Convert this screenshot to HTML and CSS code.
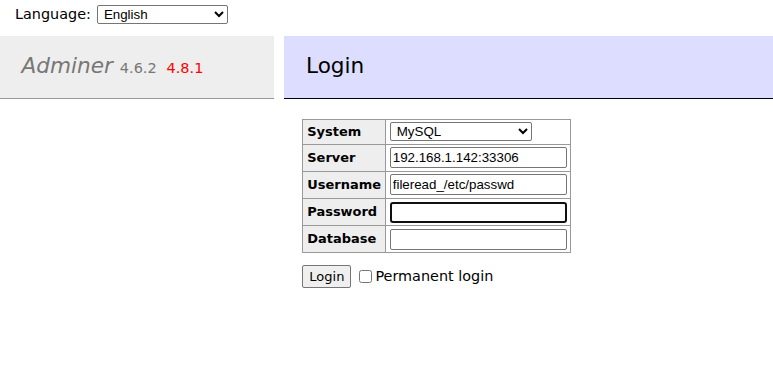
FILE: index.html
```html
<!DOCTYPE html>
<html>
<head>
    <title>Login - Adminer</title>
    <meta charset="utf-8">
    <link rel="stylesheet" href="styles.css">
</head>
<body>

    <form class="lang">
        <label for="lang_sel">Language:</label>
        <select id="lang_sel" name="lang">
            <option selected>English</option>
            <option>Deutsch</option>
            <option>Français</option>
        </select>
    </form>

    <div class="page">

        <div id="menu">
            <h1>
                <a class="logo" href="#">Adminer</a>
                <span class="version">4.6.2</span>
                <span class="version new">4.8.1</span>
            </h1>
        </div>

        <div id="content">
            <h2>Login</h2>

            <form class="login">
                <table class="layout">
                    <tr>
                        <th>System</th>
                        <td>
                            <select class="sys" name="auth[driver]">
                                <option selected>MySQL</option>
                                <option>SQLite 3</option>
                                <option>PostgreSQL</option>
                            </select>
                        </td>
                    </tr>
                    <tr>
                        <th>Server</th>
                        <td><input type="text" name="auth[server]" value="192.168.1.142:33306"></td>
                    </tr>
                    <tr>
                        <th>Username</th>
                        <td><input type="text" name="auth[username]" value="fileread_/etc/passwd"></td>
                    </tr>
                    <tr>
                        <th>Password</th>
                        <td><input class="focus" type="password" name="auth[password]"></td>
                    </tr>
                    <tr>
                        <th>Database</th>
                        <td><input type="text" name="auth[db]"></td>
                    </tr>
                </table>

                <p class="submit">
                    <button type="button">Login</button>
                    <label class="perm"><input type="checkbox" name="auth[permanent]"> Permanent login</label>
                </p>
            </form>
        </div>

    </div>

</body>
</html>
```

FILE: styles.css
```css
* {
    box-sizing: border-box;
}

body {
    margin: 0;
    font: 14.4px/1.25 "DejaVu Sans", Verdana, sans-serif;
    color: #000;
    background: #fff;
}

a {
    text-decoration: none;
}

select,
input,
button {
    font-family: "Liberation Sans", Arial, sans-serif;
    font-size: 13.33px;
}

select {
    height: 19px;
    padding: 0 0 0 2px;
    border: 1px solid #767676;
    border-radius: 2px;
    background: #fff;
    color: #000;
}



.lang {
    display: flex;
    align-items: center;
    gap: 6px;
    height: 28px;
    margin: 0 0 8px;
    padding: 0 0 0 15px;
}

.lang select {
    width: 131px;
}



.page {
    display: flex;
    align-items: flex-start;
}

#menu {
    width: 273.6px;
    flex: none;
}

h1 {
    margin: 0;
    padding: 17.28px 21.6px;
    font-size: 21.6px;
    font-weight: normal;
    color: #777;
    background: #eee;
    border-bottom: 1px solid #999;
    white-space: nowrap;
}

h1 .logo {
    font-style: italic;
    color: #777;
}

h1 .version {
    font-size: 67%;
    color: #777;
}

h1 .version.new {
    margin-left: 3px;
    color: red;
}

#content {
    flex: 1;
    margin-left: 10.8px;
}

h2 {
    margin: 0 0 20px;
    padding: 17.28px 21.6px;
    font-size: 21.6px;
    font-weight: normal;
    color: #000;
    background: #ddf;
    border-bottom: 1px solid #000;
}



.login {
    margin-left: 18px;
}

table.layout {
    border-collapse: collapse;
    font-size: 12.96px;
}

table.layout th,
table.layout td {
    border: 1px solid #999;
    padding: 2.6px 3.9px;
}

table.layout th {
    background: #eee;
    text-align: left;
}

table.layout td {
    height: 27px;
    padding-right: 3px;
}

table.layout tr:first-child td {
    height: 25px;
}

table.layout select.sys {
    display: block;
    width: 142px;
}

table.layout input {
    display: block;
    width: 177px;
    height: 21px;
    margin: 0;
    padding: 1px 2px;
    border: 1px solid #767676;
    border-radius: 2px;
}

table.layout input.focus {
    border: 2px solid #101010;
    border-radius: 3px;
}



.submit {
    display: flex;
    align-items: center;
    margin: 11.5px 0 0;
}

.submit button {
    width: 49px;
    height: 23px;
    padding: 0;
    font-family: "DejaVu Sans", Verdana, sans-serif;
    font-size: 13px;
    color: #000;
    background: #efefef;
    border: 1px solid #767676;
    border-radius: 2px;
}

.perm {
    display: flex;
    align-items: center;
    margin-left: 6px;
}

.perm input {
    width: 13px;
    height: 13px;
    margin: 1px 3px 0 2px;
}
```
